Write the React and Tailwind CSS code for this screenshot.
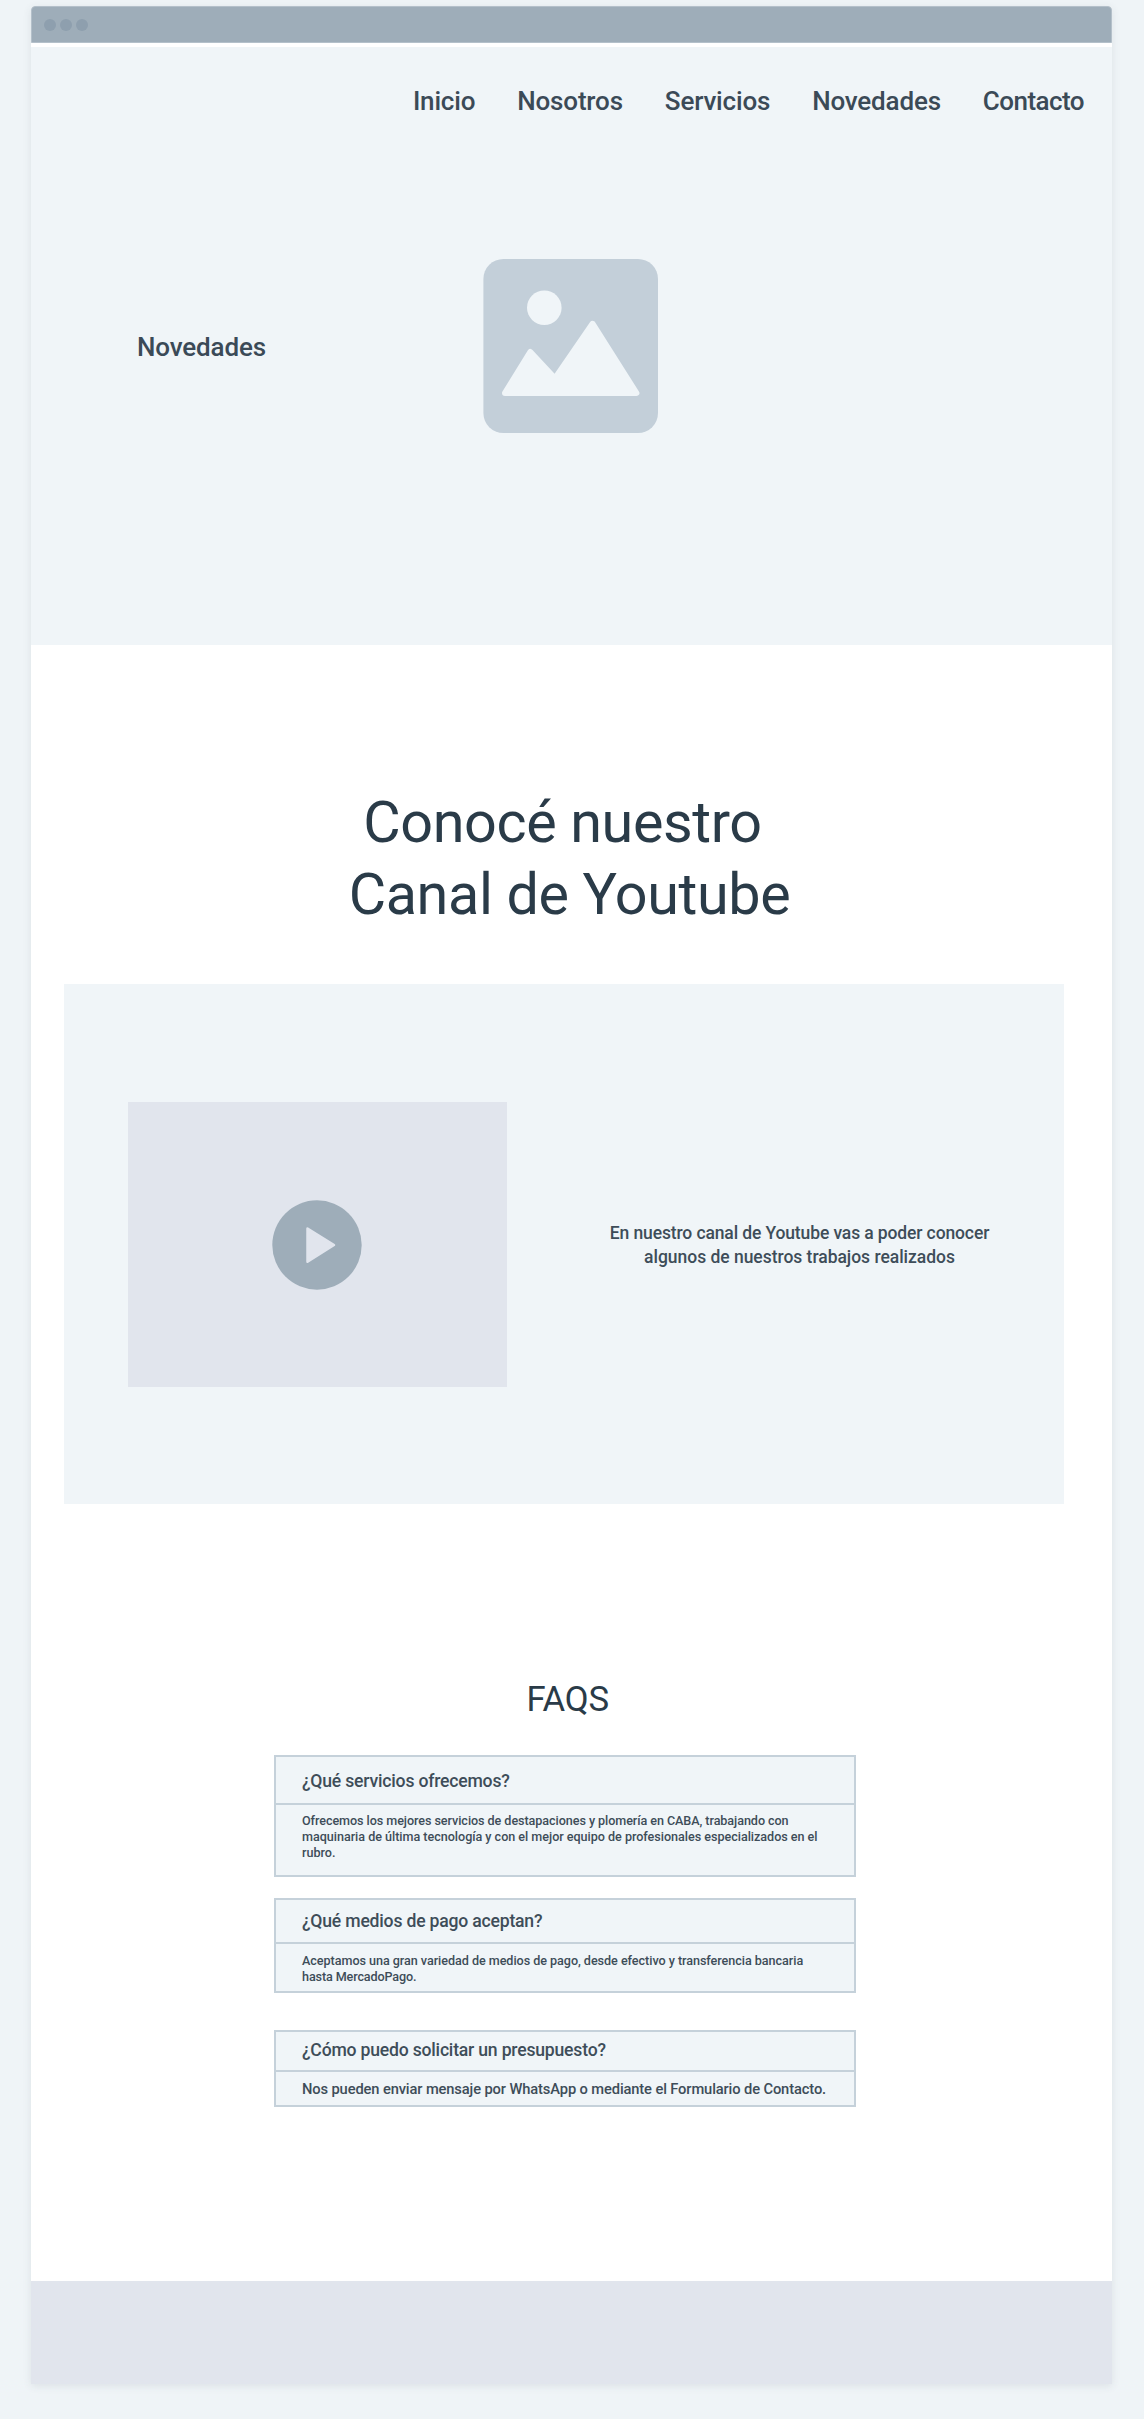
import React from "react";

const NAV = ["Inicio", "Nosotros", "Servicios", "Novedades"];

function TitleBar() {
  return (
    <div className="flex h-[37px] shrink-0 items-center gap-1 rounded-t-[4px] border border-[#b4c0ca] bg-[#9eadb9] pl-[11.5px]">
      <span className="size-3 rounded-full bg-[#8e9fae]" />
      <span className="size-3 rounded-full bg-[#8e9fae]" />
      <span className="size-3 rounded-full bg-[#8e9fae]" />
    </div>
  );
}

function ImagePlaceholder() {
  return (
    <svg className="h-[174px] w-[175px]" viewBox="0 0 175 174">
      <rect x="0.4" width="174.6" height="174" rx="20" fill="#c3cfd9" />
      <circle cx="61.3" cy="48.7" r="17.3" fill="#f0f5f8" />
      <path
        d="M22 134 L47.3 93 L72 119.5 L109.6 64.8 L153.4 134 Z"
        fill="#f0f5f8"
        stroke="#f0f5f8"
        strokeWidth="6"
        strokeLinejoin="round"
      />
    </svg>
  );
}

function Hero() {
  return (
    <header className="mt-1 h-[598px] bg-[#f0f5f8] pt-9">
      <nav className="flex h-9 justify-end gap-[42px] pr-7 text-[26px] leading-9 font-medium tracking-[-0.18px] text-[#3b4a57]">
        {NAV.map((label) => (
          <a key={label}>{label}</a>
        ))}
        <a className="tracking-[-0.55px]">Contacto</a>
      </nav>
      <div className="mt-[140px] flex items-center pl-[106px]">
        <p className="w-[346px] pt-px text-[26px] leading-8 font-medium tracking-[-0.15px] text-[#3b4a57]">Novedades</p>
        <ImagePlaceholder />
      </div>
    </header>
  );
}

function VideoPanel() {
  return (
    <section className="mt-[53px] ml-[33px] flex h-[520px] w-[1000px] items-center bg-[#f0f5f8] pt-px pl-[63.5px]">
      <div className="flex h-[285px] w-[379px] items-center justify-center bg-[#e1e5ed]">
        <svg className="size-[90px]" viewBox="0 0 90 90">
          <circle cx="45" cy="45" r="44.7" fill="#9eadb9" />
          <path
            d="M35.5 28.5 L62 45 L35.5 61.8 Z"
            fill="#e1e5ed"
            stroke="#e1e5ed"
            strokeWidth="2.5"
            strokeLinejoin="round"
          />
        </svg>
      </div>
      <p className="ml-[93px] flex w-[400px] flex-col text-center text-[17.5px] leading-6 font-medium text-[#3e4d59]">
        <span className="tracking-[-0.12px]">En nuestro canal de Youtube vas a poder conocer</span>
        <span className="tracking-[-0.03px]">algunos de nuestros trabajos realizados</span>
      </p>
    </section>
  );
}

function Faq({ className, head, body, question, children }) {
  return (
    <article className={`w-[582px] border-2 border-[#c5d1da] bg-[#f0f5f8] text-[#3e4d59] ${className}`}>
      <h3 className={`border-b-2 border-[#c5d1da] pl-[26px] text-[17.6px] leading-6 font-medium tracking-[-0.2px] ${head}`}>
        {question}
      </h3>
      <p className={`flex flex-col pl-[26px] font-medium whitespace-nowrap ${body}`}>{children}</p>
    </article>
  );
}

export default function App() {
  return (
    <div className="h-[2419px] bg-[#eff4f7] pt-1.5 pl-[31px] font-[Roboto,sans-serif]">
      <main className="flex h-[2378px] w-[1081px] flex-col rounded-t-[4px] bg-white shadow-[0_2px_8px_rgba(60,70,80,0.1)]">
        <TitleBar />
        <Hero />
        <h1 className="mt-[142px] flex flex-col text-center text-[57.5px] leading-[72px] tracking-[-0.37px] text-[#2a3b48]">
          <span className="pr-[18px]">Conocé nuestro</span>
          <span className="pr-1">Canal de Youtube</span>
        </h1>
        <VideoPanel />
        <h2 className="mt-[175px] pl-[495.5px] text-[34.7px] leading-10 tracking-[-0.2px] text-[#2a3b48]">FAQS</h2>
        <section className="mt-9 ml-[243px] flex flex-col">
          <Faq
            className="h-[122px]"
            head="h-12 pt-3"
            body="pt-2 text-[12.6px] leading-4"
            question="¿Qué servicios ofrecemos?"
          >
            <span className="tracking-[-0.067px]">
              Ofrecemos los mejores servicios de destapaciones y plomería en CABA, trabajando con
            </span>
            <span className="tracking-[-0.03px]">
              maquinaria de última tecnología y con el mejor equipo de profesionales especializados en el
            </span>
            <span>rubro.</span>
          </Faq>
          <Faq
            className="mt-[21px] h-[95px]"
            head="h-11 pt-[9px]"
            body="pt-[9px] text-[12.6px] leading-4"
            question="¿Qué medios de pago aceptan?"
          >
            <span className="tracking-[-0.045px]">
              Aceptamos una gran variedad de medios de pago, desde efectivo y transferencia bancaria
            </span>
            <span className="tracking-[-0.12px]">hasta MercadoPago.</span>
          </Faq>
          <Faq
            className="mt-[37px] h-[77px]"
            head="h-10 pt-1.5"
            body="pt-[7px] text-[14.7px] leading-5 tracking-[-0.12px]"
            question="¿Cómo puedo solicitar un presupuesto?"
          >
            <span>Nos pueden enviar mensaje por WhatsApp o mediante el Formulario de Contacto.</span>
          </Faq>
        </section>
        <footer className="mt-auto h-[103px] bg-[#e1e5ed]" />
      </main>
    </div>
  );
}
